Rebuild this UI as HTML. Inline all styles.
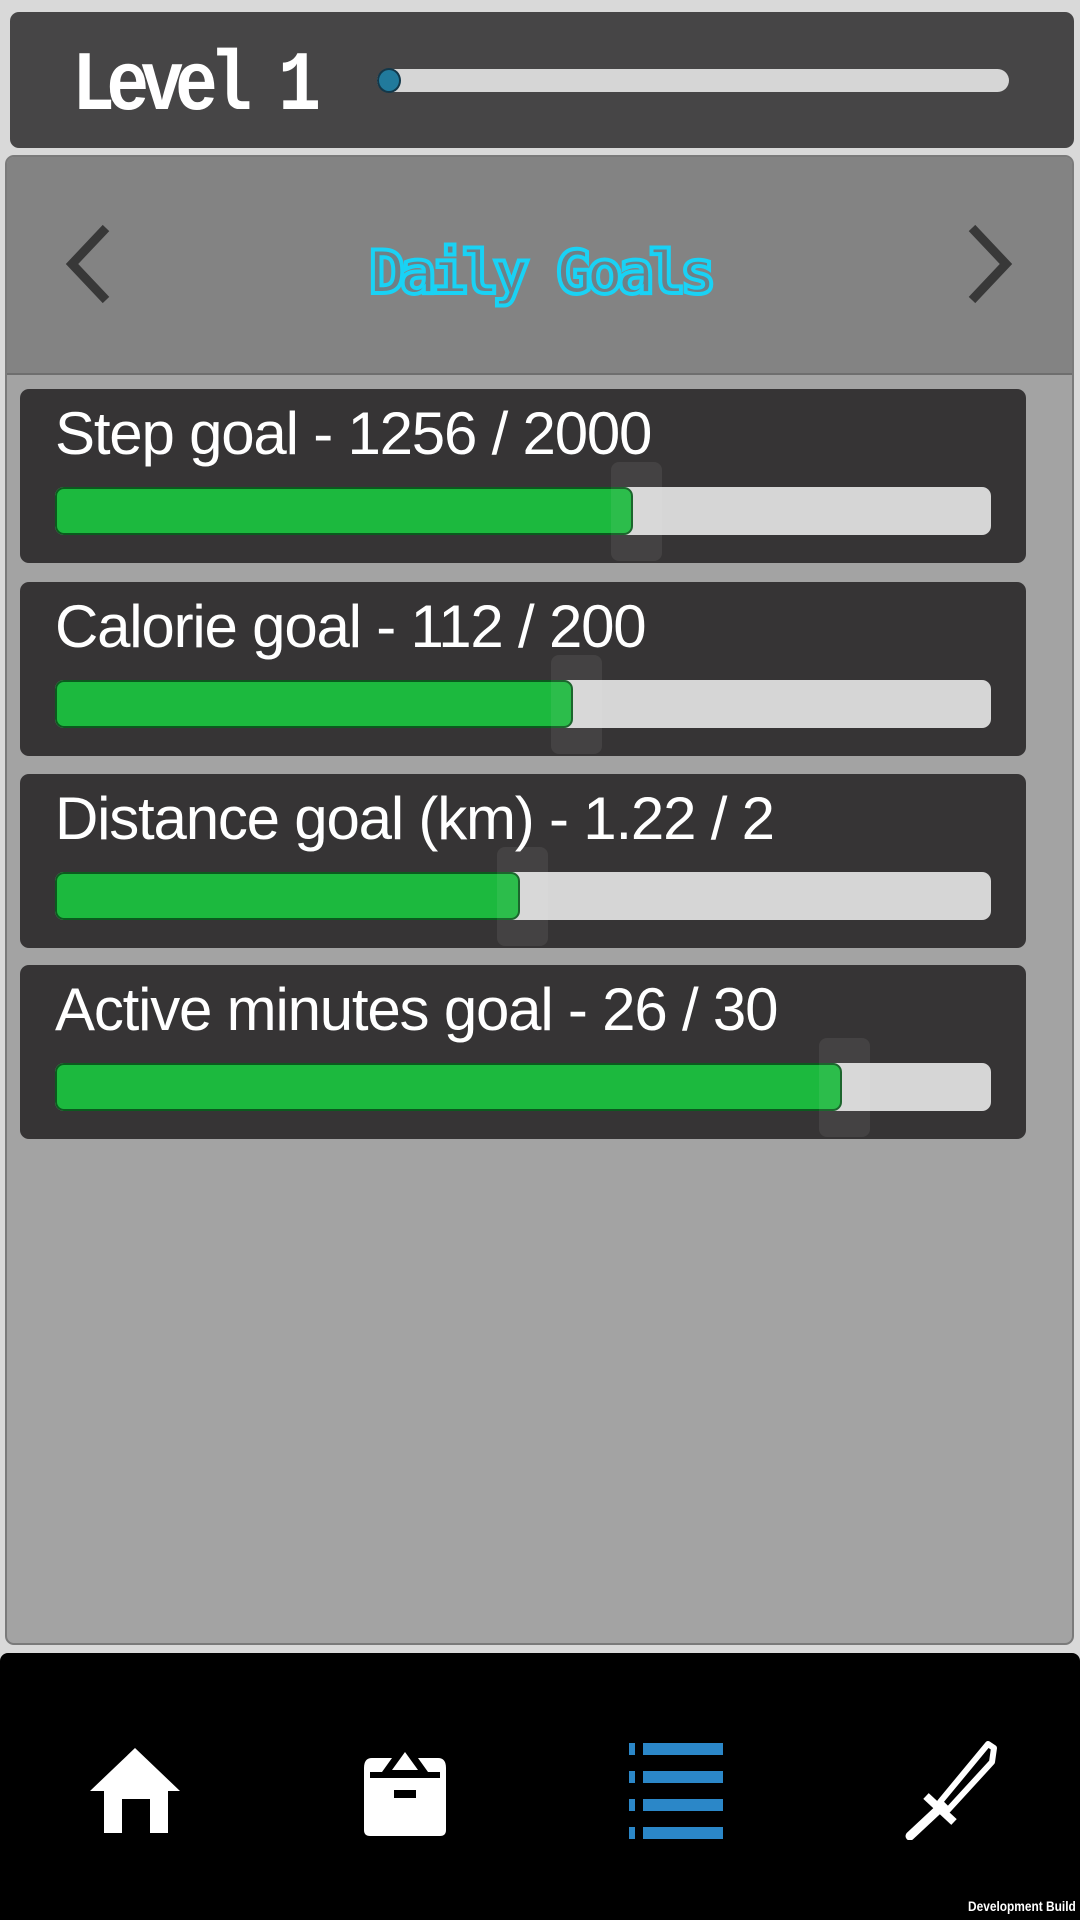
<!DOCTYPE html>
<html><head><meta charset="utf-8"><style>
*{margin:0;padding:0;box-sizing:border-box}
body{width:1080px;height:1920px;background:#d9d9d9;position:relative;overflow:hidden;font-family:"Liberation Sans",sans-serif}
.abs{position:absolute}
.top{left:10px;top:12px;width:1064px;height:136px;background:#464546;border-radius:9px}
.lvl{left:72px;top:40px;font-family:"Liberation Mono",monospace;font-weight:bold;font-size:84px;color:#fff;letter-spacing:-10px;transform:scaleX(0.85);transform-origin:left}
.slider{left:377px;top:69px;width:632px;height:23px;background:#d6d6d6;border-radius:12px}
.knob{left:377px;top:68px;width:24px;height:25px;background:#217a9c;border:2px solid #13384a;border-radius:50%}
.panel{left:5px;top:155px;width:1069px;height:1490px;background:#a3a3a3;border:2px solid #7a7a7a;border-radius:9px;overflow:hidden}
.head{left:0;top:0;width:100%;height:218px;background:#838383;border-bottom:2px solid #6e6e6e}
.title{left:0;width:1080px;top:238px;text-align:center;font-family:"DejaVu Sans Mono",monospace;font-weight:bold;font-size:60px;letter-spacing:-5px;color:#6f7f86;-webkit-text-stroke:4px #19d2f5}
.card{left:20px;width:1006px;height:174px;background:#363435;border-radius:9px}
.lbl{left:35px;top:10px;color:#fff;font-size:60px;letter-spacing:-1.2px;white-space:nowrap}
.track{left:35px;top:98px;width:936px;height:48px;background:#d6d6d6;border-radius:9px}
.fill{left:35px;top:98px;height:48px;background:#1cb93e;border:2px solid #0b5a1e;border-radius:9px}
.ghost{top:73px;width:51px;height:99px;background:rgba(255,255,255,0.07);border-radius:8px}
.nav{left:0;top:1653px;width:1080px;height:267px;background:#000;border-radius:8px 8px 0 0}
.dev{right:4px;bottom:6px;color:#fff;font-weight:bold;font-size:14px;font-family:"Liberation Sans",sans-serif;transform:scaleX(0.85);transform-origin:right}
</style></head><body>
<div class="abs top"></div>
<div class="abs lvl">Level 1</div>
<div class="abs slider"></div>
<div class="abs knob"></div>
<div class="abs panel"><div class="abs head"></div></div>
<svg class="abs" style="left:60px;top:222px" width="56" height="84"><path d="M46 6 L12 42 L46 78" fill="none" stroke="#383838" stroke-width="9"/></svg>
<svg class="abs" style="left:962px;top:222px" width="56" height="84"><path d="M10 6 L44 42 L10 78" fill="none" stroke="#383838" stroke-width="9"/></svg>
<div class="abs title">Daily Goals</div>

<div class="abs card" style="top:389px"><div class="abs lbl">Step goal - 1256 / 2000</div><div class="abs track"></div><div class="abs fill" style="width:578px"></div><div class="abs ghost" style="left:591px"></div></div>
<div class="abs card" style="top:582px"><div class="abs lbl">Calorie goal - 112 / 200</div><div class="abs track"></div><div class="abs fill" style="width:518px"></div><div class="abs ghost" style="left:531px"></div></div>
<div class="abs card" style="top:774px"><div class="abs lbl">Distance goal (km) - 1.22 / 2</div><div class="abs track"></div><div class="abs fill" style="width:465px"></div><div class="abs ghost" style="left:477px"></div></div>
<div class="abs card" style="top:965px"><div class="abs lbl">Active minutes goal - 26 / 30</div><div class="abs track"></div><div class="abs fill" style="width:787px"></div><div class="abs ghost" style="left:799px"></div></div>

<div class="abs nav"><div class="abs dev">Development Build</div></div>
<svg class="abs" style="left:88px;top:1745px" width="94" height="90"><path d="M47 3 L92 46 L80 46 L80 88 L62 88 L62 54 L34 54 L34 88 L16 88 L16 46 L2 46 Z" fill="#fff"/></svg>
<svg class="abs" style="left:356px;top:1750px" width="98" height="88"><path d="M8 18 Q8 8 16 8 L36 8 L26 22 L14 22 L14 28 L84 28 L84 22 L72 22 L62 8 L82 8 Q90 8 90 18 L90 80 Q90 86 84 86 L14 86 Q8 86 8 80 Z" fill="#fff"/><path d="M49 2 L62 20 L36 20 Z" fill="#fff"/><rect x="38" y="40" width="22" height="8" fill="#000"/></svg>
<svg class="abs" style="left:626px;top:1740px" width="100" height="100"><g fill="#2b87c8"><rect x="3" y="3" width="6" height="12"/><rect x="17" y="3" width="80" height="12"/><rect x="3" y="31" width="6" height="12"/><rect x="17" y="31" width="80" height="12"/><rect x="3" y="59" width="6" height="12"/><rect x="17" y="59" width="80" height="12"/><rect x="3" y="87" width="6" height="12"/><rect x="17" y="87" width="80" height="12"/></g></svg>
<svg class="abs" style="left:896px;top:1740px" width="104" height="100"><path d="M92 4 L98 8 L96 22 L52 70 L44 62 Z" fill="none" stroke="#fff" stroke-width="6" stroke-linejoin="round"/><path d="M30 56 L58 82" stroke="#fff" stroke-width="8"/><path d="M44 68 L14 96" stroke="#fff" stroke-width="9" stroke-linecap="round"/></svg>
</body></html>
